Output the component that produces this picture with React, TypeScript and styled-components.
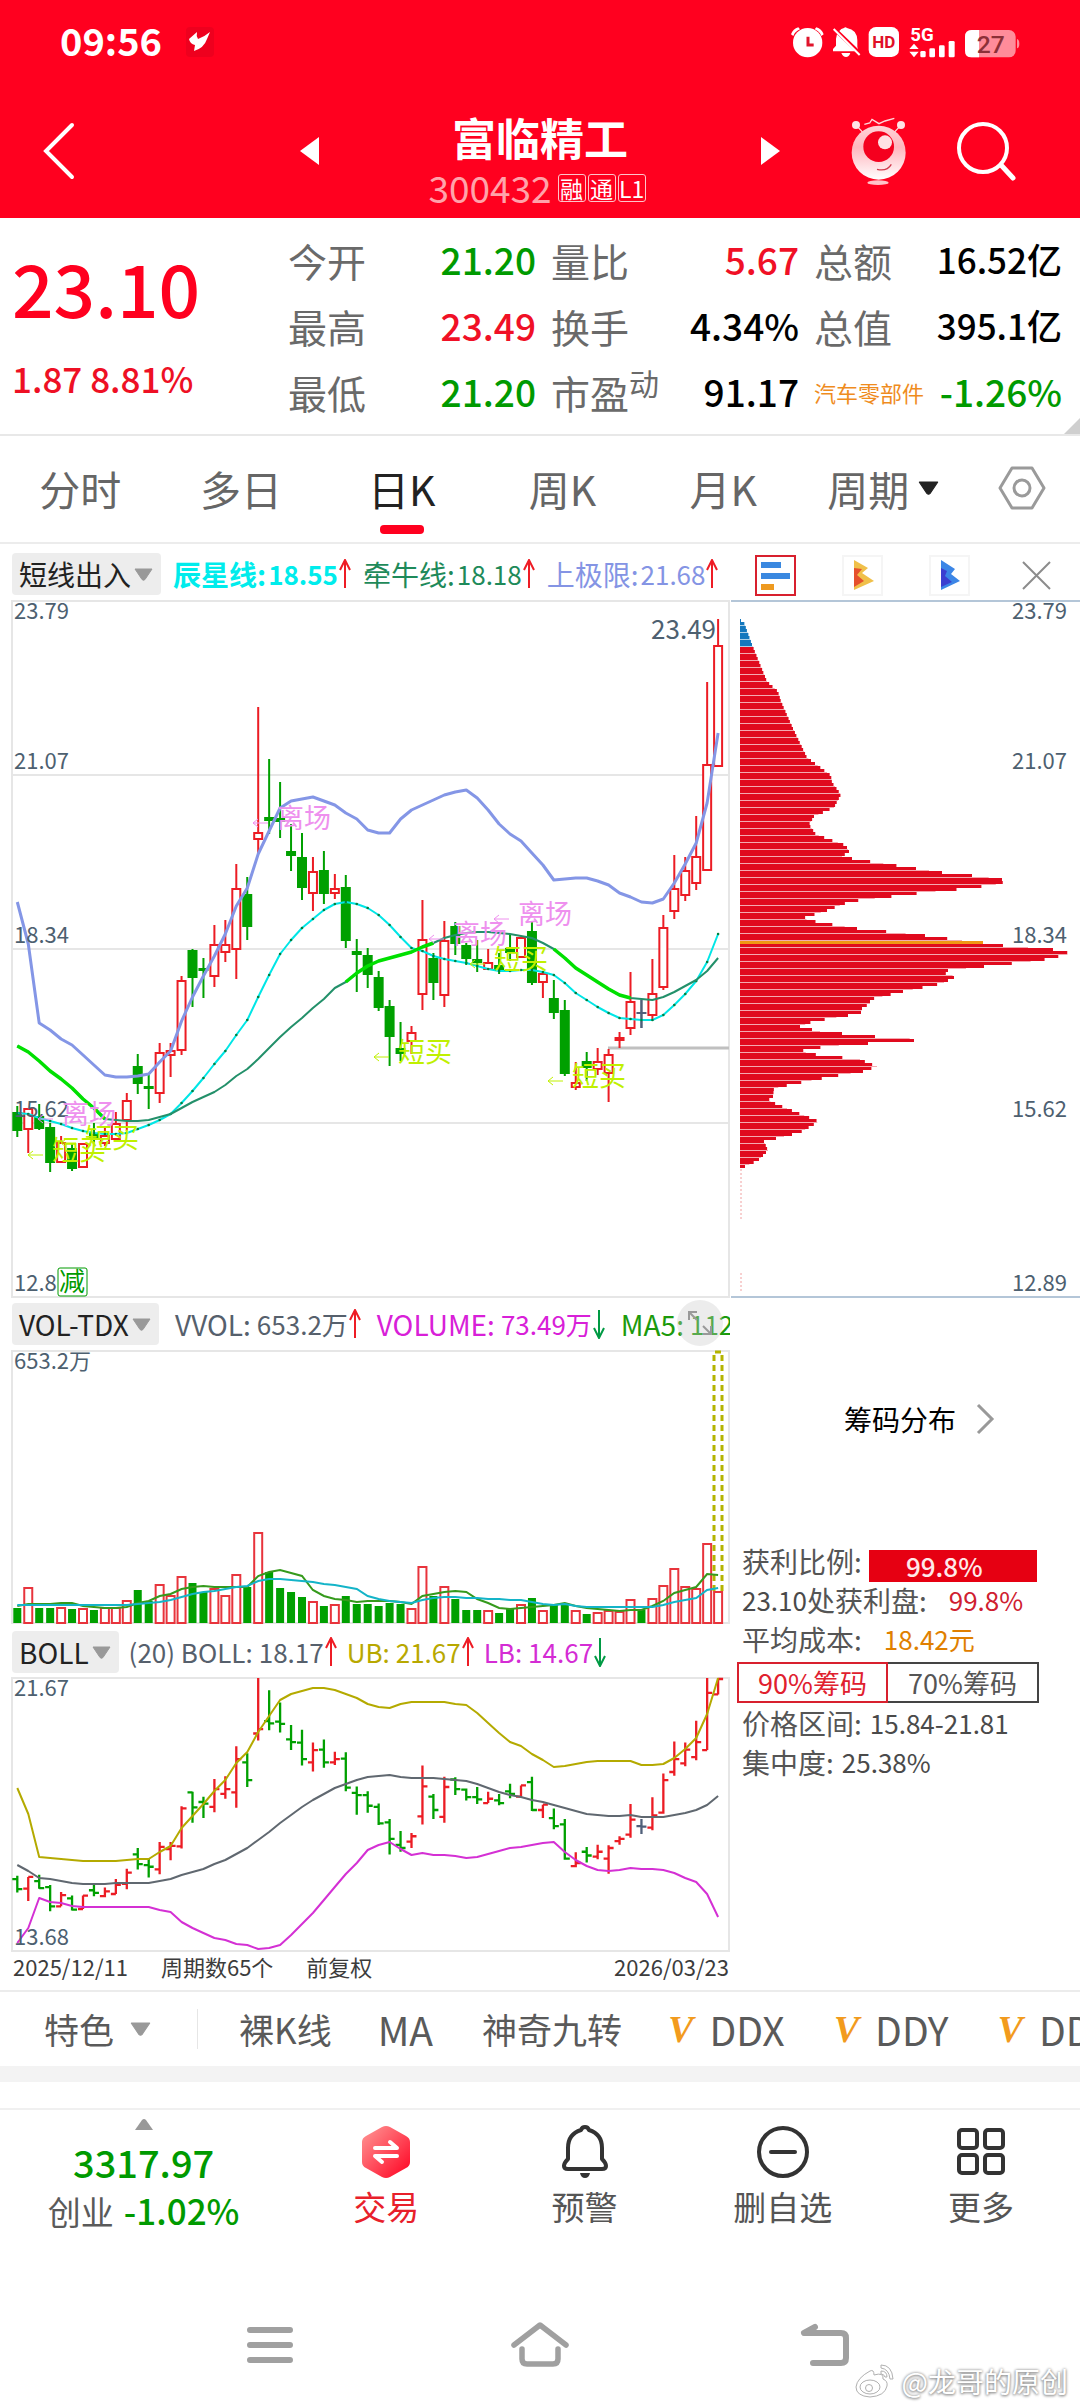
import React, { useState } from 'react';
import styled, { createGlobalStyle } from 'styled-components';

const FONT = '"Noto Sans CJK SC", "Noto Sans", sans-serif';
const RED = '#e60012';
const BRIGHT_RED = '#ff001f';
const GREEN = '#009a00';
const INK = '#000000';

const GlobalStyle = createGlobalStyle`
  * { box-sizing: border-box; }
  body { margin: 0; background: #ffffff; font-family: ${FONT}; }
  button { font: inherit; color: inherit; background: none; border: 0; padding: 0; margin: 0; cursor: pointer; }
  dl, dt, dd, h1, p { margin: 0; font-weight: inherit; }
  svg { display: block; }
`;

/* ---------- market data, in chart coordinates ---------- */

type Kind = 'r' | 'g' | 'n';
// kind, high, body top, body bottom, low
const CANDLES: [Kind, number, number, number, number][] = [
  ['g', 1105, 1111, 1130, 1136], ['r', 1107, 1107, 1129, 1152], ['g', 1103, 1115, 1128, 1129],
  ['g', 1122, 1126, 1162, 1171], ['r', 1135, 1141, 1162, 1162], ['g', 1142, 1147, 1168, 1170],
  ['r', 1142, 1142, 1167, 1167], ['g', 1122, 1132, 1137, 1143], ['r', 1127, 1134, 1143, 1145],
  ['r', 1111, 1122, 1139, 1139], ['r', 1092, 1099, 1120, 1130], ['g', 1053, 1065, 1083, 1093],
  ['g', 1073, 1085, 1088, 1108], ['r', 1042, 1051, 1093, 1102], ['r', 1042, 1049, 1055, 1076],
  ['r', 975, 979, 1050, 1054], ['g', 948, 949, 977, 1006], ['g', 957, 967, 970, 997],
  ['r', 924, 943, 976, 986], ['r', 919, 943, 952, 961], ['r', 863, 887, 949, 978],
  ['g', 876, 893, 926, 939], ['r', 706, 831, 839, 852], ['g', 758, 816, 820, 833],
  ['g', 781, 817, 821, 837], ['g', 823, 850, 855, 870], ['g', 832, 856, 887, 899],
  ['r', 856, 870, 893, 910], ['g', 850, 869, 893, 903], ['r', 873, 887, 893, 898],
  ['g', 874, 886, 940, 947], ['g', 938, 950, 954, 991], ['g', 947, 954, 974, 987],
  ['g', 970, 976, 1007, 1010], ['g', 999, 1005, 1036, 1065], ['g', 1021, 1047, 1053, 1060],
  ['r', 1025, 1031, 1041, 1053], ['r', 899, 938, 994, 1009], ['g', 952, 957, 982, 999],
  ['r', 920, 939, 995, 1006], ['g', 921, 925, 943, 954], ['g', 942, 944, 958, 964],
  ['g', 939, 958, 962, 971], ['r', 948, 961, 969, 969], ['g', 952, 964, 969, 973],
  ['g', 933, 947, 952, 960], ['r', 936, 936, 957, 957], ['g', 920, 930, 982, 984],
  ['r', 972, 972, 982, 997], ['g', 979, 997, 1012, 1018], ['g', 999, 1009, 1073, 1075],
  ['r', 1061, 1081, 1087, 1089], ['g', 1051, 1060, 1067, 1080], ['r', 1047, 1060, 1069, 1074],
  ['r', 1048, 1053, 1073, 1101], ['r', 1031, 1036, 1040, 1047], ['r', 971, 1000, 1028, 1034],
  ['n', 999, 1012, 1013, 1027], ['r', 958, 992, 1015, 1020], ['r', 914, 926, 987, 989],
  ['r', 854, 887, 911, 918], ['r', 856, 869, 895, 900], ['r', 815, 855, 883, 889],
  ['r', 681, 763, 870, 870], ['r', 618, 644, 766, 766],
];

const UPPER = [901, 943, 1022, 1029, 1038, 1044, 1054, 1064, 1074, 1076, 1076, 1075, 1073, 1061, 1050, 1020, 996, 975, 955, 933, 905, 887, 853, 830, 807, 800, 798, 796, 800, 804, 812, 818, 829, 832, 832, 818, 809, 804, 799, 794, 791, 789, 797, 809, 823, 833, 840, 852, 864, 879, 878, 877, 877, 880, 884, 892, 896, 901, 902, 898, 882, 863, 842, 802, 732];
const STAR = [1112, 1113, 1117, 1120, 1123, 1127, 1130, 1132, 1133, 1133, 1132, 1128, 1124, 1119, 1113, 1102, 1090, 1077, 1063, 1050, 1034, 1019, 996, 974, 953, 939, 927, 918, 909, 903, 901, 903, 907, 914, 924, 936, 947, 950, 955, 958, 960, 962, 965, 968, 970, 970, 969, 969, 971, 974, 982, 992, 999, 1006, 1012, 1017, 1018, 1019, 1019, 1014, 1004, 993, 980, 961, 933];
const BULL = [1045, 1051, 1060, 1070, 1078, 1087, 1098, 1107, 1118, 1119, 1120, 1120, 1119, 1116, 1113, 1107, 1101, 1096, 1091, 1084, 1075, 1068, 1058, 1047, 1036, 1026, 1017, 1007, 998, 987, 981, 972, 965, 960, 957, 954, 951, 946, 942, 937, 934, 932, 931, 931, 932, 933, 935, 937, 942, 948, 957, 967, 974, 981, 988, 994, 997, 998, 999, 996, 991, 985, 979, 970, 957];
const BULL_BOLD: [number, number][] = [[0, 8], [30, 38], [49, 56]];

const VOLUME = [1606, 1586, 1606, 1606, 1606, 1607, 1607, 1608, 1606, 1606, 1599, 1588, 1599, 1583, 1594, 1575, 1581, 1590, 1587, 1594, 1573, 1585, 1531, 1570, 1586, 1590, 1595, 1600, 1604, 1603, 1594, 1602, 1602, 1604, 1601, 1602, 1607, 1565, 1594, 1585, 1597, 1608, 1608, 1609, 1611, 1606, 1603, 1596, 1609, 1603, 1601, 1609, 1612, 1611, 1609, 1610, 1598, 1608, 1597, 1584, 1567, 1585, 1587, 1542, 1590];
const VOL_MA5 = [1605, 1603, 1603, 1603, 1602, 1602, 1605, 1606, 1607, 1607, 1606, 1602, 1600, 1595, 1593, 1588, 1586, 1585, 1586, 1586, 1586, 1586, 1575, 1571, 1569, 1572, 1575, 1589, 1595, 1598, 1599, 1601, 1600, 1600, 1600, 1601, 1603, 1595, 1593, 1591, 1590, 1591, 1598, 1602, 1607, 1608, 1607, 1606, 1605, 1604, 1602, 1605, 1607, 1608, 1609, 1610, 1609, 1609, 1605, 1600, 1592, 1589, 1586, 1573, 1574];
const VOL_MA10 = [1604, 1604, 1604, 1604, 1604, 1604, 1604, 1604, 1604, 1604, 1604, 1603, 1602, 1601, 1599, 1596, 1593, 1591, 1590, 1588, 1586, 1585, 1580, 1578, 1578, 1579, 1580, 1581, 1583, 1584, 1586, 1588, 1595, 1598, 1600, 1601, 1602, 1599, 1597, 1596, 1596, 1597, 1597, 1598, 1598, 1599, 1599, 1601, 1603, 1604, 1603, 1605, 1606, 1606, 1606, 1606, 1606, 1606, 1606, 1604, 1601, 1599, 1597, 1589, 1587];

const BOLL_UP = [1787, 1813, 1856, 1857, 1858, 1859, 1860, 1860, 1860, 1860, 1859, 1858, 1858, 1851, 1845, 1827, 1815, 1803, 1790, 1779, 1762, 1751, 1731, 1715, 1699, 1693, 1690, 1687, 1687, 1689, 1693, 1697, 1703, 1706, 1707, 1703, 1701, 1701, 1701, 1701, 1703, 1704, 1712, 1722, 1732, 1741, 1745, 1753, 1759, 1766, 1765, 1763, 1761, 1760, 1760, 1760, 1760, 1764, 1764, 1763, 1757, 1748, 1737, 1713, 1677];
const BOLL_MID = [1864, 1870, 1877, 1878, 1880, 1882, 1883, 1883, 1883, 1882, 1882, 1882, 1882, 1880, 1878, 1874, 1871, 1868, 1863, 1859, 1853, 1847, 1839, 1831, 1822, 1814, 1806, 1799, 1793, 1787, 1783, 1779, 1776, 1775, 1774, 1776, 1777, 1777, 1777, 1778, 1779, 1780, 1783, 1787, 1791, 1794, 1796, 1799, 1801, 1804, 1807, 1810, 1813, 1814, 1815, 1815, 1814, 1816, 1816, 1816, 1814, 1812, 1809, 1804, 1795];
const BOLL_LOW = [1942, 1927, 1897, 1901, 1902, 1905, 1906, 1906, 1906, 1906, 1906, 1906, 1906, 1909, 1911, 1921, 1927, 1932, 1937, 1939, 1943, 1944, 1948, 1947, 1944, 1934, 1923, 1912, 1899, 1886, 1873, 1862, 1849, 1844, 1841, 1848, 1854, 1852, 1854, 1854, 1855, 1857, 1856, 1853, 1850, 1847, 1846, 1844, 1842, 1841, 1851, 1859, 1865, 1869, 1870, 1869, 1867, 1868, 1868, 1869, 1872, 1877, 1881, 1893, 1916];

// width, y
const CHIPS: [number, number][] = [
  [1, 619], [4, 621], [12, 643], [27, 680], [38, 690], [41, 700], [53, 727], [67, 756], [91, 774], [92, 781],
  [101, 793], [94, 806], [74, 815], [69, 823], [76, 833], [106, 844], [109, 850], [102, 855], [117, 858],
  [163, 865], [202, 871], [242, 875], [262, 878], [263, 882], [227, 887], [185, 891], [143, 896], [110, 900],
  [87, 909], [62, 917], [80, 921], [117, 927], [185, 934], [222, 939], [243, 941], [263, 944], [313, 948],
  [332, 952], [300, 959], [253, 964], [199, 970], [216, 975], [202, 982], [163, 990], [130, 998], [130, 1002],
  [122, 1007], [121, 1011], [108, 1014], [73, 1020], [60, 1025], [80, 1030], [135, 1035], [187, 1038],
  [148, 1041], [108, 1043], [62, 1048], [67, 1052], [120, 1058], [137, 1065], [123, 1070], [92, 1075],
  [51, 1083], [34, 1087], [33, 1095], [28, 1099], [47, 1107], [79, 1120], [60, 1131], [24, 1140], [28, 1149],
  [18, 1159], [5, 1165], [0, 1168],
];

const xAt = (i: number) => 17.3 + 10.95 * i;
const colorOf = (k: Kind) => (k === 'r' ? '#ec1c24' : k === 'g' ? '#00a000' : '#50607a');
const line = (ys: number[], from = 0, to = ys.length - 1) =>
  ys.slice(from, to + 1).map((y, n) => `${xAt(from + n).toFixed(1)},${y}`).join(' ');
const chipWidth = (y: number) => {
  const n = CHIPS.findIndex((c) => c[1] >= y);
  if (n <= 0) return n === 0 ? CHIPS[0][0] : 0;
  const [w0, y0] = CHIPS[n - 1];
  const [w1, y1] = CHIPS[n];
  return w0 + ((w1 - w0) * (y - y0)) / (y1 - y0);
};

/* ---------- header ---------- */

const Header = styled.header`
  background: ${BRIGHT_RED};
  color: #ffffff;
`;
const StatusBar = styled.div`
  height: 84px;
  padding: 0 60px;
  display: flex;
  align-items: center;
  justify-content: space-between;
`;
const StatusGroup = styled.div<{ $gap: number }>`
  display: flex;
  align-items: center;
  gap: ${(p) => p.$gap}px;
`;
const Clock = styled.span`
  font-size: 38px;
  line-height: 44px;
  padding-bottom: 4px;
  font-weight: 700;
`;
const NavBar = styled.div`
  height: 134px;
  display: grid;
  grid-template-columns: 1fr 440px 1fr;
`;
const NavSide = styled.div<{ $left?: boolean }>`
  display: flex;
  align-items: center;
  justify-content: space-between;
  padding: ${(p) => (p.$left ? '0 0 0 43px' : '0 64px 0 0')};
`;
const NavTools = styled.div`
  display: flex;
  align-items: center;
  gap: 47px;
`;
const TitleBlock = styled.div`
  align-self: end;
  text-align: center;
`;
const StockName = styled.h1`
  font-size: 44px;
  line-height: 46px;
  font-weight: 700;
`;
const CodeLine = styled.div`
  height: 58px;
  padding: 0 6px 2px 0;
  display: flex;
  align-items: center;
  justify-content: center;
  gap: 2px;
`;
const Code = styled.span`
  margin-right: 4px;
  padding-bottom: 2px;
  font-size: 37px;
  line-height: 40px;
  color: #ffa3ab;
`;
const Tag = styled.span`
  width: 28px;
  height: 28px;
  border: 1px solid #ffc4ca;
  border-radius: 3px;
  font-size: 23px;
  line-height: 26px;
  text-align: center;
`;

/* ---------- quote ---------- */

const Quote = styled.section`
  position: relative;
  display: grid;
  grid-template-columns: 261fr 248fr 248fr 248fr;
  column-gap: 15px;
  padding: 9px 18px 9px 12px;
  border-bottom: 2px solid #e8e8e8;
`;
const PriceBlock = styled.div`
  color: ${BRIGHT_RED};
  font-weight: 500;
`;
const Price = styled.p`
  font-size: 73px;
  line-height: 118px;
`;
const Change = styled.p`
  font-size: 35px;
  line-height: 66px;
  color: #ee1024;
`;
const StatList = styled.dl`
  display: grid;
  grid-auto-rows: 66px;
`;
const StatRow = styled.div`
  display: flex;
  align-items: center;
  justify-content: space-between;
  white-space: nowrap;
`;
const StatLabel = styled.dt<{ $industry?: boolean }>`
  display: flex;
  font-size: ${(p) => (p.$industry ? 22 : 39)}px;
  line-height: 48px;
  color: ${(p) => (p.$industry ? '#ef8c1e' : '#6a6a6a')};
`;
const Sup = styled.sup`
  font-size: 30px;
  line-height: 28px;
  vertical-align: top;
`;
const StatValue = styled.dd<{ $color: string; $size: number }>`
  padding-bottom: 2px;
  font-size: ${(p) => p.$size}px;
  line-height: 48px;
  font-weight: 500;
  color: ${(p) => p.$color};
`;
const Corner = styled.span`
  position: absolute;
  right: 0;
  bottom: 0;
  border-style: solid;
  border-width: 0 0 16px 16px;
  border-color: transparent transparent #cfcfcf transparent;
`;

/* ---------- tabs ---------- */

const Tabs = styled.nav`
  height: 108px;
  display: grid;
  grid-template-columns: repeat(6, 161fr) 116fr;
  border-bottom: 2px solid #ececec;
`;
const Tab = styled.button<{ $active?: boolean }>`
  position: relative;
  display: flex;
  align-items: center;
  justify-content: center;
  gap: 8px;
  padding-bottom: 3px;
  font-size: 41px;
  line-height: 48px;
  color: ${(p) => (p.$active ? '#222222' : '#666666')};
  &::after {
    content: '';
    display: ${(p) => (p.$active ? 'block' : 'none')};
    position: absolute;
    left: calc(50% - 22px);
    bottom: 8px;
    width: 44px;
    height: 9px;
    border-radius: 4px;
    background: ${BRIGHT_RED};
  }
`;

/* ---------- charts ---------- */

const Workspace = styled.main`
  display: grid;
  grid-template-columns: 730fr 350fr;
  border-bottom: 2px solid #ececec;
`;
const Column = styled.div`
  min-width: 0;
`;
const LegendBar = styled.div<{ $first?: boolean; $gap?: number }>`
  height: ${(p) => (p.$first ? 55 : 50)}px;
  padding: ${(p) => (p.$first ? 9 : 4)}px 0 0 12px;
  display: flex;
  align-items: flex-start;
  gap: ${(p) => p.$gap ?? 12}px;
  overflow: hidden;
  white-space: nowrap;
  position: relative;
`;
const Picker = styled.button`
  flex: none;
  height: 42px;
  padding: 0 8px 0 7px;
  display: flex;
  align-items: center;
  gap: 3px;
  border-radius: 4px;
  background: #ededed;
  font-size: 28px;
  line-height: 40px;
  color: #222222;
`;
const Legend = styled.div<{ $color: string; $bold?: boolean }>`
  flex: none;
  height: 42px;
  display: flex;
  align-items: center;
  color: ${(p) => p.$color};
  font-weight: ${(p) => (p.$bold ? 700 : 400)};
`;
const LegendName = styled.span<{ $size: number; $space: number }>`
  margin-right: ${(p) => p.$space}px;
  font-size: ${(p) => p.$size}px;
  line-height: 40px;
`;
const LegendValue = styled.span`
  margin-right: 1px;
  font-size: 26px;
  line-height: 40px;
`;
const ExpandButton = styled.button`
  position: absolute;
  right: 7px;
  top: 1px;
  width: 46px;
  height: 46px;
  border-radius: 50%;
  background: rgba(200, 200, 200, 0.35);
  display: flex;
  align-items: center;
  justify-content: center;
`;
const Canvas = styled.svg`
  width: 100%;
  height: auto;
  overflow: visible;
  font-family: ${FONT};
`;
const DateRow = styled.div`
  height: 37px;
  padding: 0 1px 11px 13px;
  display: flex;
  align-items: center;
  gap: 33px;
  font-size: 22px;
  line-height: 24px;
  color: #3c3c3c;
`;
const LastDate = styled.time`
  margin-left: auto;
`;

/* ---------- chip panel ---------- */

const ChipTools = styled.div`
  height: 55px;
  padding: 11px 0 0 25px;
  display: flex;
  gap: 46px;
`;
const ChipTool = styled.button<{ $border: string }>`
  flex: none;
  width: 41px;
  height: 41px;
  border: 2px solid ${(p) => p.$border};
`;
const ChipLink = styled.a`
  margin: 99px 0 101px;
  padding-left: 114px;
  display: flex;
  align-items: center;
  gap: 20px;
  font-size: 28px;
  line-height: 42px;
  color: #000000;
  text-decoration: none;
`;
const Fact = styled.p`
  height: 39px;
  padding-left: 12px;
  display: flex;
  align-items: center;
  white-space: nowrap;
  font-size: 28px;
  line-height: 38px;
  color: #555555;
`;
const Num = styled.span<{ $color?: string; $indent?: number }>`
  margin-left: ${(p) => p.$indent ?? 0}px;
  font-size: 26px;
  color: ${(p) => p.$color ?? '#4a4a4a'};
`;
const Meter = styled.span`
  align-self: flex-end;
  width: 168px;
  height: 32px;
  margin: 0 0 -2px 7px;
  padding-right: 17px;
  background: ${RED};
  color: #ffe9e9;
  font-size: 26px;
  line-height: 32px;
  font-weight: 500;
  text-align: center;
`;
const Range = styled.div`
  margin: 4px 0 0 7px;
  display: flex;
`;
const RangeButton = styled.button<{ $active?: boolean }>`
  width: 151px;
  height: 41px;
  border: 2px solid ${(p) => (p.$active ? '#d8202e' : '#444444')};
  border-left-width: ${(p) => (p.$active ? 2 : 0)}px;
  color: ${(p) => (p.$active ? '#e0202e' : '#555555')};
  font-size: 27px;
  line-height: 36px;
`;

/* ---------- bottom ---------- */

const Toolbar = styled.div`
  height: 74px;
  padding-left: 44px;
  display: flex;
  align-items: center;
  overflow: hidden;
  white-space: nowrap;
  font-size: 35px;
  line-height: 44px;
  color: #5a5a5a;
`;
const ToolButton = styled.button<{ $latin?: boolean }>`
  flex: none;
  height: 44px;
  margin-right: ${(p) => (p.$latin ? 49 : 46)}px;
  display: flex;
  align-items: center;
  gap: 16px;
  font-size: ${(p) => (p.$latin ? 39 : 35)}px;
`;
const Divider = styled.span`
  flex: none;
  width: 1px;
  height: 40px;
  margin-right: 41px;
  background: #e6e6e6;
`;
const Vip = styled.span`
  font-family: "Liberation Serif", serif;
  font-size: 38px;
  line-height: 44px;
  font-weight: 700;
  font-style: italic;
  color: #f29b1d;
`;
const Band = styled.div`
  height: 44px;
  border-top: 16px solid #f3f3f3;
  border-bottom: 2px solid #f0f0f0;
`;
const BottomBar = styled.footer`
  height: 132px;
  display: grid;
  grid-template-columns: 287fr repeat(4, 198fr);
`;
const IndexButton = styled.button`
  display: flex;
  flex-direction: column;
  align-items: center;
  color: ${GREEN};
  font-weight: 500;
`;
const IndexValue = styled.span`
  margin-top: 8px;
  font-size: 38px;
  line-height: 48px;
`;
const IndexChange = styled.span`
  font-size: 35px;
  line-height: 48px;
`;
const IndexName = styled.span`
  margin-right: 10px;
  font-size: 33px;
  font-weight: 400;
  color: #5a5a5a;
`;
const Action = styled.button<{ $color?: string }>`
  display: flex;
  flex-direction: column;
  align-items: center;
  gap: 4px;
  padding-top: 14px;
  font-size: 33px;
  line-height: 44px;
  color: ${(p) => p.$color ?? '#555555'};
`;
const SystemNav = styled.nav`
  position: relative;
  height: 168px;
  padding: 38px 105px 0 135px;
  display: grid;
  grid-template-columns: 270fr 270fr 300fr;
  place-items: center;
`;
const Watermark = styled.div`
  position: absolute;
  right: 12px;
  bottom: 11px;
  display: flex;
  align-items: center;
  gap: 6px;
  font-size: 28px;
  line-height: 36px;
  color: #ffffff;
  text-shadow: 0 0 3px #8a8a8a, 0 1px 3px #8a8a8a;
`;

/* ---------- small drawings ---------- */

const Down = ({ color, w = 19, h = 13 }: { color: string; w?: number; h?: number }) => (
  <svg width={w} height={h} viewBox="0 0 19 13" aria-hidden="true">
    <path d="M1 1H18L11 11.5Q9.500 13 8 11.500Z" fill={color} stroke={color} strokeLinejoin="round" />
  </svg>
);

const Arrow = ({ up }: { up?: boolean }) => (
  <svg width="12" height="30" viewBox="0 0 12 30" fill="none" stroke={up ? '#ee1c25' : '#009a44'} strokeWidth="2" aria-hidden="true">
    <path d={up ? 'M6 29V2M1 11L6 1L11 11' : 'M6 1V28M1 19L6 29L11 19'} />
  </svg>
);

const PhoneIcons = () => (
  <svg width="230" height="34" viewBox="33 14 690 102" fill="#fff" aria-hidden="true">
    <circle cx="86" cy="67" r="44" />
    <path d="M36 42Q42 26 58 21L63 27Q48 33 43 47ZM134 42Q128 26 112 21L107 27Q122 33 127 47Z" />
    <path d="M87 49V74H104" fill="none" stroke="#e0142b" strokeWidth="9" />
    <path d="M174 42L228 93H162V86L171 76V55Z M181 32Q186 24 195 23Q199 18 204 23Q234 28 235 60V80L237 86Z" />
    <path d="M187 98H214Q210 110 201 110T187 98Z" />
    <path d="M164 26L242 104" stroke="#fff" strokeWidth="6" />
    <rect x="269" y="20" width="91" height="90" rx="22" />
    <text x="314" y="83" fontSize="51" fontWeight="700" textAnchor="middle" fill="#e01028" fontFamily="Roboto, sans-serif">HD</text>
    <text x="394" y="61" fontSize="56" fontWeight="700" fontFamily="Roboto, sans-serif">5G</text>
    <path d="M405 70L419 86H391ZM405 111L419 94H391Z" />
    <rect x="424" y="92" width="16" height="19" rx="4" />
    <rect x="451" y="84" width="17" height="27" rx="4" />
    <rect x="480" y="75" width="17" height="36" rx="4" />
    <rect x="509" y="62" width="18" height="49" rx="4" />
    <rect x="558" y="29" width="152" height="82" rx="20" opacity="0.55" />
    <path d="M714 56Q721 58 721 70T714 84Z" opacity="0.55" />
    <path d="M600 29H578Q558 29 558 49V91Q558 111 578 111H600Z" />
    <text x="635" y="97" fontSize="74" fontWeight="500" textAnchor="middle" fill="#8c3038" fontFamily="Roboto, sans-serif">27</text>
  </svg>
);

const Robot = () => (
  <svg width="60" height="72" viewBox="210 285 180 216" aria-hidden="true">
    <defs>
      <linearGradient id="face" x1="0" y1="0" x2="0" y2="1">
        <stop offset="0" stopColor="#ffd3d8" />
        <stop offset="0.4" stopColor="#ffb6be" />
        <stop offset="1" stopColor="#fff" />
      </linearGradient>
    </defs>
    <path d="M232 316L252 338M365 316L345 338M256 313L272 309L279 298L300 311L318 303L346 295" fill="none" stroke="#ffd9dd" strokeWidth="4" />
    <circle cx="231" cy="315" r="12" fill="#ffe3e6" />
    <circle cx="366" cy="315" r="12" fill="#ffe3e6" />
    <circle cx="299" cy="398" r="81" fill="url(#face)" />
    <circle cx="299" cy="380" r="46" fill="#f5001e" />
    <circle cx="318" cy="367" r="21" fill="#ffe0e4" />
    <path d="M294 448Q324 455 337 433" fill="none" stroke="#d03a4c" strokeWidth="4" />
    <ellipse cx="297" cy="488" rx="32" ry="7" fill="#ffc3c9" />
  </svg>
);

/* ---------- charts ---------- */

const Grid = ({ ys, top, bottom }: { ys: number[]; top: number; bottom: number }) => (
  <g stroke="#e6e6e6" strokeWidth="2" fill="none">
    <path d={`M12 ${top}H729V${bottom}H12Z`} />
    {ys.map((y) => <path key={y} d={`M12 ${y}H729`} />)}
  </g>
);

const AxisText = ({ x = 14, y, end, size = 22, children }: { x?: number; y: number; end?: boolean; size?: number; children: string }) => (
  <text x={x} y={y + 8} fontSize={size} textAnchor={end ? 'end' : 'start'} fill="#4d6070">{children}</text>
);

const SIGNALS: [string, number, number, string][] = [
  ['离场', 62, 1113, '#ee90ee'], ['离场', 277, 817, '#ee90ee'], ['离场', 453, 933, '#ee90ee'], ['离场', 518, 913, '#ee90ee'],
  ['短买', 52, 1149, '#c0f000'], ['短买', 85, 1137, '#c0f000'], ['短买', 398, 1051, '#c0f000'], ['短买', 494, 958, '#c0f000'], ['短买', 572, 1075, '#c0f000'],
];

const PriceChart = () => (
  <Canvas viewBox="0 598 730 700" role="img" aria-label="日K线图">
    <Grid ys={[774, 948, 1122]} top={600} bottom={1296} />
    <path d="M608 1047H729" stroke="#c0c0c0" strokeWidth="3" />
    {CANDLES.map(([k, high, top, bottom, low], i) => {
      const x = xAt(i);
      const c = colorOf(k);
      return (
        <g key={i} stroke={c} strokeWidth="2">
          <path d={`M${x} ${high}V${top}M${x} ${bottom}V${low}`} />
          {k === 'n'
            ? <path d={`M${x - 5} ${top}H${x + 5}M${x} ${high}V${low}`} />
            : <rect x={x - 4} y={top + 1} width="8" height={Math.max(bottom - top - 2, 1)} fill={k === 'r' ? '#fff' : c} />}
        </g>
      );
    })}
    <g fill="none" strokeLinejoin="round">
      <polyline points={line(STAR)} stroke="#00e6e6" strokeWidth="2" />
      {STAR.map((y, i) => <circle key={i} cx={xAt(i)} cy={y} r="1.300" fill="#008040" />)}
      <polyline points={line(BULL)} stroke="#23906a" strokeWidth="2" />
      {BULL_BOLD.map(([a, b]) => <polyline key={a} points={line(BULL, a, b)} stroke="#00e000" strokeWidth="3.500" />)}
      <polyline points={line(UPPER)} stroke="#8496e6" strokeWidth="3" />
    </g>
    <AxisText y={610}>23.79</AxisText>
    <AxisText y={760}>21.07</AxisText>
    <AxisText y={934}>18.34</AxisText>
    <AxisText y={1108}>15.62</AxisText>
    <AxisText y={1282}>12.8</AxisText>
    <AxisText x={716} y={630} size={26} end>23.49</AxisText>
    {SIGNALS.map(([label, x, y, c], i) => (
      <g key={i}>
        <text x={x} y={y + 10} fontSize="27" fill={c}>{label}</text>
        <path d={`M${x - 9} ${y + 5}H${x - 24}M${x - 19} ${y + 1}L${x - 24} ${y + 5}L${x - 19} ${y + 9}`} fill="none" stroke={c} />
      </g>
    ))}
    <rect x="58" y="1267" width="29" height="28" rx="2" fill="#fff" stroke="#009a00" />
    <text x="72" y="1290" fontSize="26" textAnchor="middle" fill="#009a00">减</text>
  </Canvas>
);

const VolumeChart = () => (
  <Canvas viewBox="0 1348 730 278" role="img" aria-label="成交量">
    <Grid ys={[]} top={1350} bottom={1622} />
    {VOLUME.map((y, i) => {
      const k = CANDLES[i][0] === 'r' ? 'r' : 'g';
      return <rect key={i} x={xAt(i) - 4} y={y + 1} width="8" height={1621 - y} fill={k === 'r' ? '#fff' : '#00a000'} stroke={k === 'r' ? '#e8343c' : '#00a000'} strokeWidth={k === 'r' ? 2 : 0} />;
    })}
    <path d="M714 1590V1351H722V1590" fill="none" stroke="#b4b400" strokeWidth="3" strokeDasharray="6 4" />
    <g fill="none" strokeWidth="2">
      <polyline points={line(VOL_MA5)} stroke="#359a1c" />
      <polyline points={line(VOL_MA10)} stroke="#14b4c8" />
    </g>
    <AxisText y={1360}>653.2万</AxisText>
  </Canvas>
);

const toBoll = (y: number) => 1604.6 + (y - 600) * 0.5351;

const BollChart = () => (
  <Canvas viewBox="0 1676 730 276" role="img" aria-label="布林线">
    <Grid ys={[]} top={1677} bottom={1950} />
    {CANDLES.map(([k, high, top, bottom, low], i) => {
      const x = xAt(i);
      const [open, close] = (k === 'r' ? [bottom, top] : [top, bottom]).map((v) => Math.max(toBoll(v), 1678));
      return (
        <path
          key={i}
          d={`M${x} ${Math.max(toBoll(high), 1677)}V${toBoll(low)}M${x - 5} ${open}H${x}M${x} ${close}H${x + 5}`}
          stroke={colorOf(k)}
          strokeWidth="2.300"
        />
      );
    })}
    <g fill="none" strokeWidth="2" strokeLinejoin="round">
      <polyline points={line(BOLL_UP)} stroke="#b4aa00" />
      <polyline points={line(BOLL_MID)} stroke="#606870" />
      <polyline points={line(BOLL_LOW)} stroke="#d430d4" />
    </g>
    <AxisText y={1687}>21.67</AxisText>
    <AxisText y={1936}>13.68</AxisText>
  </Canvas>
);

const ChipChart = () => {
  const rows = Array.from({ length: 79 }, (_, n) => 618 + n * 7);
  return (
    <Canvas viewBox="730 598 350 700" role="img" aria-label="筹码分布图">
      <path d="M731 600H1080M731 1296H1080" stroke="#b4c6d8" strokeWidth="2" />
      {rows.map((y) => (
        <g key={y} fill={y < 640 ? '#1478be' : '#e00a1e'}>
          <rect x="740" y={y} width={chipWidth(y + 1)} height="3" />
          <rect x="740" y={y + 3} width={chipWidth(y + 4)} height="3" />
          <rect x="740" y={y + 6} width={chipWidth(y + 6)} height="1" opacity="0.35" />
        </g>
      ))}
      <rect x="740" y="940" width="243" height="3" fill="#f09614" />
      <path d="M741 1168V1218M741 1272V1292" stroke="#f0a0a0" strokeDasharray="2 2" />
      {[['23.79', 610], ['21.07', 760], ['18.34', 934], ['15.62', 1108], ['12.89', 1282]].map(([t, y]) => (
        <AxisText key={t} x={1067} y={y as number} end>{t as string}</AxisText>
      ))}
    </Canvas>
  );
};

/* ---------- page ---------- */

type Stat = { label: string; value: string; color: string; size?: number; sup?: string; industry?: boolean };
const STATS: Stat[][] = [
  [
    { label: '今开', value: '21.20', color: GREEN },
    { label: '最高', value: '23.49', color: '#f01026' },
    { label: '最低', value: '21.20', color: GREEN },
  ],
  [
    { label: '量比', value: '5.67', color: '#f01026' },
    { label: '换手', value: '4.34%', color: INK },
    { label: '市盈', value: '91.17', color: INK, sup: '动' },
  ],
  [
    { label: '总额', value: '16.52亿', color: INK, size: 35 },
    { label: '总值', value: '395.1亿', color: INK, size: 35 },
    { label: '汽车零部件', value: '-1.26%', color: GREEN, industry: true },
  ],
];

type LegendProps = { name: string; value: string; color: string; dir?: 'up' | 'down'; bold?: boolean; size?: number; space?: number };
const LegendItem = ({ name, value, color, dir, bold, size = 28, space = 6 }: LegendProps) => (
  <Legend $color={color} $bold={bold}>
    <LegendName $size={size} $space={space}>{name}:</LegendName>
    <LegendValue>{value}</LegendValue>
    {dir && <Arrow up={dir === 'up'} />}
  </Legend>
);

export default function App() {
  const [tab, setTab] = useState('日K');
  const [range, setRange] = useState('90%筹码');

  return (
    <>
      <GlobalStyle />
      <Header>
        <StatusBar>
          <StatusGroup $gap={24}>
            <Clock>09:56</Clock>
            <svg width="28" height="30" viewBox="0 0 28 30" aria-hidden="true">
              <rect width="28" height="30" rx="4" fill="#ee001e" />
              <path d="M11 5L3 12Q4 17 9 18L8 24Q18 21 21 12L24 5Q18 10 12 12Q10 9 11 5Z" fill="#fff" />
            </svg>
          </StatusGroup>
          <PhoneIcons />
        </StatusBar>
        <NavBar>
          <NavSide $left>
            <button aria-label="返回">
              <svg width="32" height="58" viewBox="0 0 32 58" fill="none" stroke="#fff" strokeWidth="4" strokeLinecap="round"><path d="M29 3L3 29L29 55" /></svg>
            </button>
            <button aria-label="上一只">
              <svg width="20" height="28" viewBox="0 0 20 28"><path d="M19 0V28L0 14Z" fill="#fff" /></svg>
            </button>
          </NavSide>
          <TitleBlock>
            <StockName>富临精工</StockName>
            <CodeLine>
              <Code>300432</Code>
              <Tag>融</Tag>
              <Tag>通</Tag>
              <Tag>L1</Tag>
            </CodeLine>
          </TitleBlock>
          <NavSide>
            <button aria-label="下一只">
              <svg width="20" height="28" viewBox="0 0 20 28"><path d="M1 0V28L20 14Z" fill="#fff" /></svg>
            </button>
            <NavTools>
              <button aria-label="助手"><Robot /></button>
              <button aria-label="搜索">
                <svg width="60" height="60" viewBox="0 0 60 60" fill="none" stroke="#fff" strokeWidth="4" strokeLinecap="round">
                  <circle cx="27" cy="27" r="24" />
                  <path d="M45 44L57 57" strokeWidth="5" />
                </svg>
              </button>
            </NavTools>
          </NavSide>
        </NavBar>
      </Header>

      <Quote>
        <PriceBlock>
          <Price>23.10</Price>
          <Change>1.87 8.81%</Change>
        </PriceBlock>
        {STATS.map((col, i) => (
          <StatList key={i}>
            {col.map((s) => (
              <StatRow key={s.label}>
                <StatLabel $industry={s.industry}>{s.label}{s.sup && <Sup>{s.sup}</Sup>}</StatLabel>
                <StatValue $color={s.color} $size={s.size ?? 37}>{s.value}</StatValue>
              </StatRow>
            ))}
          </StatList>
        ))}
        <Corner />
      </Quote>

      <Tabs>
        {['分时', '多日', '日K', '周K', '月K'].map((t) => (
          <Tab key={t} $active={t === tab} onClick={() => setTab(t)}>{t}</Tab>
        ))}
        <Tab>周期<Down color="#222222" w={23} h={14} /></Tab>
        <Tab aria-label="设置">
          <svg width="48" height="44" viewBox="0 0 48 44" fill="none" stroke="#9a9a9a" strokeWidth="3" strokeLinejoin="round">
            <path d="M14 2H34L46 22L34 42H14L2 22Z" />
            <circle cx="24" cy="22" r="8" />
          </svg>
        </Tab>
      </Tabs>

      <Workspace>
        <Column>
          <LegendBar $first>
            <Picker>短线出入<Down color="#999999" /></Picker>
            <LegendItem name="辰星线" value="18.55" color="#00ecec" dir="up" space={2} bold />
            <LegendItem name="牵牛线" value="18.18" color="#1e8a5a" dir="up" space={2} />
            <LegendItem name="上极限" value="21.68" color="#8494e4" dir="up" space={2} />
          </LegendBar>
          <PriceChart />
          <LegendBar $gap={16}>
            <Picker>VOL-TDX<Down color="#999999" /></Picker>
            <LegendItem name="VVOL" value="653.2万" color="#56606c" dir="up" />
            <LegendItem name="VOLUME" value="73.49万" color="#d820d8" dir="down" />
            <LegendItem name="MA5" value="112" color="#1c9a0c" />
            <ExpandButton aria-label="展开">
              <svg width="26" height="26" viewBox="0 0 26 26" fill="none" stroke="#999" strokeWidth="2"><path d="M2 10V2H10M2 2L10 10M24 16V24H16M24 24L16 16" /></svg>
            </ExpandButton>
          </LegendBar>
          <VolumeChart />
          <LegendBar $gap={10}>
            <Picker>BOLL<Down color="#999999" /></Picker>
            <LegendItem name="(20) BOLL" value="18.17" color="#56606c" dir="up" size={26} />
            <LegendItem name="UB" value="21.67" color="#b8a800" dir="up" size={26} />
            <LegendItem name="LB" value="14.67" color="#d42cd4" dir="down" size={26} />
          </LegendBar>
          <BollChart />
          <DateRow>
            <time>2025/12/11</time>
            <span>周期数65个</span>
            <span>前复权</span>
            <LastDate>2026/03/23</LastDate>
          </DateRow>
        </Column>

        <Column>
          <ChipTools>
            <ChipTool $border="#d8202e" aria-label="筹码分布">
              <svg width="37" height="37" viewBox="2 2 37 37"><path d="M6 10H26M6 21H35" stroke="#3a88e0" strokeWidth="6" /><path d="M6 32H19" stroke="#ee9a20" strokeWidth="6" /></svg>
            </ChipTool>
            <ChipTool $border="#f5f5f5" aria-label="远期筹码">
              <svg width="37" height="37" viewBox="2 2 37 37"><path d="M12 5L26 13L20 18L32 26L12 35Z" fill="#f0c04a" /><path d="M12 13L20 14L15 20L22 26L12 32Z" fill="#e6502c" /></svg>
            </ChipTool>
            <ChipTool $border="#f5f5f5" aria-label="近期筹码">
              <svg width="37" height="37" viewBox="2 2 37 37"><path d="M12 5L26 14L22 19L31 26L12 35Z" fill="#3c86e6" /><path d="M12 13L18 16L16 21L23 27L12 32Z" fill="#3b3fd0" /></svg>
            </ChipTool>
            <ChipTool $border="transparent" aria-label="关闭">
              <svg width="37" height="37" viewBox="0 0 37 37" stroke="#8c8c8c" strokeWidth="2"><path d="M5 5L32 32M32 5L5 32" /></svg>
            </ChipTool>
          </ChipTools>
          <ChipChart />
          <ChipLink href="#chips">
            筹码分布
            <svg width="19" height="32" viewBox="0 0 19 32" fill="none" stroke="#999" strokeWidth="3"><path d="M2 2L16 16L2 30" /></svg>
          </ChipLink>
          <Fact>获利比例:<Meter>99.8%</Meter></Fact>
          <Fact><Num>23.10</Num>处获利盘:<Num $color="#cf2030" $indent={22}>99.8%</Num></Fact>
          <Fact>平均成本:<Num $color="#e08000" $indent={22}>18.42元</Num></Fact>
          <Range>
            {['90%筹码', '70%筹码'].map((r) => (
              <RangeButton key={r} $active={r === range} onClick={() => setRange(r)}>{r}</RangeButton>
            ))}
          </Range>
          <Fact>价格区间:<Num $indent={8}>15.84-21.81</Num></Fact>
          <Fact>集中度:<Num $indent={8}>25.38%</Num></Fact>
        </Column>
      </Workspace>

      <Toolbar>
        <ToolButton>特色<Down color="#999999" w={21} h={14} /></ToolButton>
        <Divider />
        <ToolButton>裸K线</ToolButton>
        <ToolButton $latin>MA</ToolButton>
        <ToolButton>神奇九转</ToolButton>
        <ToolButton $latin><Vip>V</Vip>DDX</ToolButton>
        <ToolButton $latin><Vip>V</Vip>DDY</ToolButton>
        <ToolButton $latin><Vip>V</Vip>DDZ</ToolButton>
      </Toolbar>
      <Band />

      <BottomBar>
        <IndexButton>
          <svg width="20" height="20" viewBox="0 0 20 20" aria-hidden="true"><path d="M1 20L8 10Q10 8 12 10L19 20Z" fill="#999" /></svg>
          <IndexValue>3317.97</IndexValue>
          <IndexChange><IndexName>创业</IndexName>-1.02%</IndexChange>
        </IndexButton>
        <Action $color="#e8202a">
          <svg width="50" height="56" viewBox="0 0 50 56">
            <defs>
              <linearGradient id="deal" x1="0" y1="0" x2="1" y2="1"><stop offset="0" stopColor="#ff9a98" /><stop offset="1" stopColor="#ff0020" /></linearGradient>
            </defs>
            <path d="M21 3Q25 1 29 3L45 12Q49 14 49 18V38Q49 42 45 44L29 53Q25 55 21 53L5 44Q1 42 1 38V18Q1 14 5 12Z" fill="url(#deal)" />
            <path d="M14 24H36L29 18M36 32H14L21 38" fill="none" stroke="#fff" strokeWidth="4" strokeLinecap="round" strokeLinejoin="round" />
          </svg>
          交易
        </Action>
        <Action>
          <svg width="50" height="56" viewBox="0 0 50 56" fill="none" stroke="#333" strokeWidth="4" strokeLinejoin="round">
            <path d="M25 3Q28 3 29 6Q42 10 42 24V35Q46 39 46 42Q46 45 42 45H8Q4 45 4 42Q4 39 8 35V24Q8 10 21 6Q22 3 25 3Z" />
            <path d="M20 49H30Q29 54 25 54T20 49Z" fill="#333" stroke="none" />
          </svg>
          预警
        </Action>
        <Action>
          <svg width="56" height="56" viewBox="0 0 56 56" fill="none" stroke="#333" strokeWidth="4"><circle cx="28" cy="28" r="24" /><path d="M16 28H40" strokeLinecap="round" /></svg>
          删自选
        </Action>
        <Action>
          <svg width="50" height="56" viewBox="0 0 50 56" fill="none" stroke="#333" strokeWidth="4">
            <rect x="3" y="6" width="18" height="18" rx="3" /><rect x="29" y="6" width="18" height="18" rx="3" />
            <rect x="3" y="31" width="18" height="18" rx="3" /><rect x="29" y="31" width="18" height="18" rx="3" />
          </svg>
          更多
        </Action>
      </BottomBar>

      <SystemNav>
        <button aria-label="最近任务">
          <svg width="60" height="46" viewBox="0 0 60 46" stroke="#a0a0a0" strokeWidth="6" strokeLinecap="round"><path d="M10 8H50M10 23H50M10 38H50" /></svg>
        </button>
        <button aria-label="主屏幕">
          <svg width="60" height="46" viewBox="0 0 60 46" fill="none" stroke="#a0a0a0" strokeWidth="5.500" strokeLinecap="round" strokeLinejoin="round"><path d="M4 23L30 3L56 23M12 27V37Q12 42 17 42H43Q48 42 48 37V27" /></svg>
        </button>
        <button aria-label="返回上级">
          <svg width="60" height="46" viewBox="0 0 60 46" fill="none" stroke="#a0a0a0" strokeWidth="6" strokeLinecap="round" strokeLinejoin="round"><path d="M20 5L9 11H46Q51 11 51 16V36Q51 41 46 41H18" /></svg>
        </button>
        <Watermark>
          <svg width="42" height="36" viewBox="0 0 42 36" fill="#fff" stroke="#b0b0b0" aria-hidden="true">
            <path d="M16 8Q20 6 20 12Q30 9 29 16Q34 18 33 23Q31 33 16 34Q2 33 2 24Q3 15 16 8Z" />
            <ellipse cx="16" cy="24" rx="10" ry="7" />
            <circle cx="15" cy="25" r="3.500" />
            <path d="M27 2Q38 2 39 16L36 16Q35 6 27 5ZM27 8Q33 8 33 14L31 14Q30 11 27 11Z" />
          </svg>
          @龙哥的原创
        </Watermark>
      </SystemNav>
    </>
  );
}
